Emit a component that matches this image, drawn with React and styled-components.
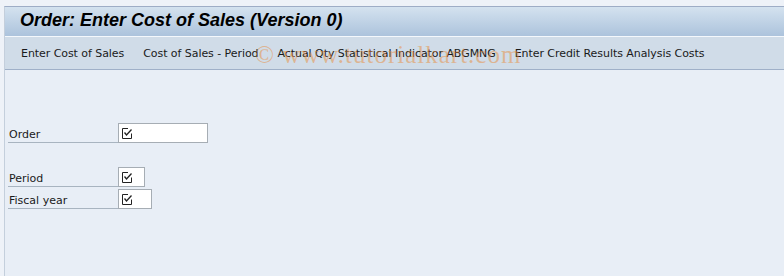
import React from "react"
import styled, { createGlobalStyle } from "styled-components"

const GlobalStyle = createGlobalStyle`
  html, body {
    margin: 0;
    padding: 0;
    background: #eef2f8;
  }
  body {
    font-family: Tahoma, "DejaVu Sans", "Liberation Sans", sans-serif;
  }
`

const Screen = styled.div`
  width: 784px;
  height: 276px;
  box-sizing: border-box;
  padding: 6px 0 0 4px;
  background: #eef2f8;
  overflow: hidden;
`

const Frame = styled.div`
  height: 100%;
  box-sizing: border-box;
  border-top: 1px solid #9eadc6;
  border-left: 1px solid #c4cfdc;
  background: #e8eef6;
  display: flex;
  flex-direction: column;
`

const TitleBar = styled.div`
  height: 30px;
  box-sizing: border-box;
  padding: 0 0 2px 15px;
  display: flex;
  align-items: center;
  background: linear-gradient(#d4e2ef, #acc3dc);
  border-bottom: 1px solid #f4f8fc;
`

const Title = styled.h1`
  margin: 0;
  font-family: "Liberation Sans", Arial, sans-serif;
  font-size: 18px;
  font-weight: bold;
  font-style: italic;
  color: #000;
`

const Toolbar = styled.div`
  position: relative;
  height: 33px;
  box-sizing: border-box;
  padding-left: 8px;
  display: flex;
  align-items: center;
  background: #d0dce8;
  border-bottom: 1px solid #9fb0c8;
`

const ToolButton = styled.button`
  border: none;
  background: transparent;
  padding: 0 8px;
  margin-right: 3px;
  font-family: "DejaVu Sans", sans-serif;
  font-size: 11px;
  letter-spacing: -0.06px;
  color: #1a1a1a;
  cursor: pointer;
  white-space: nowrap;
`

const Watermark = styled.div`
  position: absolute;
  left: 250px;
  top: 4px;
  font-family: "Liberation Serif", serif;
  font-size: 25px;
  letter-spacing: 1px;
  color: rgba(232, 140, 60, 0.5);
  pointer-events: none;
  white-space: nowrap;
`

const Body = styled.div`
  flex: 1;
  padding: 53px 0 0 3px;
  display: flex;
  flex-direction: column;
`

const Row = styled.div`
  height: 22px;
  display: flex;
  align-items: flex-start;
`

const Label = styled.label`
  width: 110px;
  height: 20px;
  box-sizing: border-box;
  padding: 0 0 1px 1px;
  display: flex;
  align-items: flex-end;
  border-bottom: 1px solid #a8b4c0;
  font-family: "DejaVu Sans", sans-serif;
  font-size: 11px;
  color: #1a1a1a;
`

const Input = styled.div`
  width: ${(p) => p.$w}px;
  height: 20px;
  box-sizing: border-box;
  border: 1px solid #a6adb4;
  background: #fff;
  display: flex;
  align-items: center;
  padding-left: 3px;
`

const CheckIcon = () => (
  <svg width="11" height="11" viewBox="0 0 11 11">
    <path d="M9.5 5.5V10.5H0.5V0.5H6" fill="none" stroke="#222" strokeWidth="1" />
    <path d="M2.5 4.5L4.5 7L9.5 1.5" fill="none" stroke="#222" strokeWidth="1.3" />
  </svg>
)

const fields = [
  { label: "Order", width: 90 },
  null,
  { label: "Period", width: 27 },
  { label: "Fiscal year", width: 34 },
]

export default function App() {
  return (
    <Screen>
      <GlobalStyle />
      <Frame>
        <TitleBar>
          <Title>Order: Enter Cost of Sales (Version 0)</Title>
        </TitleBar>
        <Toolbar>
          <ToolButton>Enter Cost of Sales</ToolButton>
          <ToolButton>Cost of Sales - Period</ToolButton>
          <ToolButton>Actual Qty Statistical Indicator ABGMNG</ToolButton>
          <ToolButton>Enter Credit Results Analysis Costs</ToolButton>
          <Watermark>© www.tutorialkart.com</Watermark>
        </Toolbar>
        <Body>
          {fields.map((f, i) =>
            f ? (
              <Row key={i}>
                <Label>{f.label}</Label>
                <Input $w={f.width}>
                  <CheckIcon />
                </Input>
              </Row>
            ) : (
              <Row key={i} />
            )
          )}
        </Body>
      </Frame>
    </Screen>
  )
}
